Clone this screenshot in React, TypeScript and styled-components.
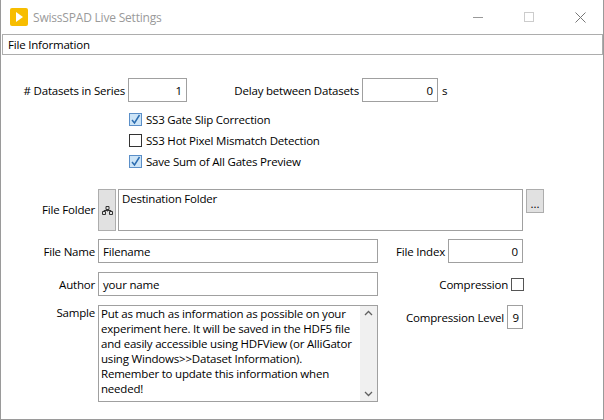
import styled, { createGlobalStyle } from "styled-components";

const Global = createGlobalStyle`
  html, body { margin: 0; padding: 0; background: #fff; }
  body { font-family: "Open Sans", "Noto Sans", sans-serif; font-size: 11.5px; letter-spacing: -0.2px; color: #000; }
`;

const Window = styled.div`
  width: 604px;
  height: 420px;
  box-sizing: border-box;
  border: 1px solid #9a9a9a;
  border-top: none;
  background: #fff;
  display: flex;
  flex-direction: column;
`;

const TitleBar = styled.div`
  height: 34px;
  display: flex;
  align-items: center;
  padding-left: 9px;
  gap: 5px;
  color: #9a9a9a;
  font-size: 12px;
`;

const TitleText = styled.span`
  flex: 1;
`;

const WinButton = styled.div`
  width: 46px;
  height: 34px;
  display: flex;
  align-items: center;
  justify-content: center;
`;

const TabHeader = styled.div`
  height: 19px;
  margin: 0 0 0 1px;
  border: 1px solid #adadad;
  display: flex;
  align-items: center;
  padding-left: 5px;
`;

const Body = styled.div`
  flex: 1;
  display: flex;
  flex-direction: column;
  padding-top: 23px;
`;

const Row = styled.div<{ $mt?: number }>`
  display: flex;
  align-items: center;
  margin-top: ${(p) => p.$mt ?? 0}px;
`;

const Label = styled.div<{ $w: number }>`
  width: ${(p) => p.$w}px;
  text-align: right;
  flex-shrink: 0;
  padding-right: 3px;
  box-sizing: border-box;
  white-space: nowrap;
`;

const Field = styled.div<{ $w: number; $h?: number; $align?: string }>`
  width: ${(p) => p.$w}px;
  height: ${(p) => p.$h ?? 24}px;
  box-sizing: border-box;
  border: 1px solid #a0a0a0;
  background: #fff;
  display: flex;
  align-items: ${(p) => (p.$h && p.$h > 30 ? "flex-start" : "center")};
  justify-content: ${(p) => (p.$align === "right" ? "flex-end" : "flex-start")};
  padding: ${(p) => (p.$h && p.$h > 30 ? "1px 3px" : "0 4px")};
  flex-shrink: 0;
`;

const CheckList = styled.div`
  display: flex;
  flex-direction: column;
  gap: 7px;
  padding-left: 128px;
  margin-top: 10px;
`;

const CheckRow = styled.div`
  display: flex;
  align-items: center;
  gap: 4px;
  height: 14px;
`;

const Box = styled.div<{ $on?: boolean }>`
  width: 13px;
  height: 13px;
  box-sizing: border-box;
  border: 1px solid ${(p) => (p.$on ? "#5b8fc8" : "#333")};
  background: ${(p) => (p.$on ? "#cce4f7" : "#fff")};
  display: flex;
  align-items: center;
  justify-content: center;
`;

const GreyButton = styled.div<{ $w: number; $h: number }>`
  width: ${(p) => p.$w}px;
  height: ${(p) => p.$h}px;
  box-sizing: border-box;
  border: 1px solid #adadad;
  background: #e1e1e1;
  display: flex;
  align-items: center;
  justify-content: center;
  flex-shrink: 0;
`;

const Stack = styled.div`
  display: flex;
`;

const Col = styled.div`
  display: flex;
  flex-direction: column;
  gap: 9px;
`;

const Sample = styled.div`
  width: 280px;
  height: 97px;
  box-sizing: border-box;
  border: 1px solid #a0a0a0;
  display: flex;
`;

const SampleText = styled.div`
  flex: 1;
  padding: 0 2px;
  line-height: 15px;
`;

const Scroll = styled.div`
  width: 17px;
  background: #f0f0f0;
  display: flex;
  flex-direction: column;
  justify-content: space-between;
  align-items: center;
  padding: 4px 0;
`;

const Check = () => (
  <svg width="11" height="11" viewBox="0 0 11 11">
    <path d="M2 6 L4.5 9 L9.5 1" stroke="#2b6cb0" strokeWidth="1.5" fill="none" />
  </svg>
);

export default function App() {
  return (
    <>
      <Global />
      <Window>
        <TitleBar>
          <svg width="18" height="18" viewBox="0 0 18 18">
            <rect width="18" height="18" rx="2" fill="#f7bd00" />
            <path d="M6 4 L13 9 L6 14 Z" fill="#fff" />
          </svg>
          <TitleText>SwissSPAD Live Settings</TitleText>
          <WinButton>
            <svg width="10" height="10"><path d="M0 5.5 H10" stroke="#999" /></svg>
          </WinButton>
          <WinButton>
            <svg width="10" height="10"><rect x="0.5" y="0.5" width="9" height="9" fill="none" stroke="#ccc" /></svg>
          </WinButton>
          <WinButton>
            <svg width="11" height="11"><path d="M0.5 0.5 L10.5 10.5 M10.5 0.5 L0.5 10.5" stroke="#777" /></svg>
          </WinButton>
        </TitleBar>
        <TabHeader>File Information</TabHeader>
        <Body>
          <Row>
            <Label $w={127}># Datasets in Series</Label>
            <Field $w={59} $align="right">1</Field>
            <Label $w={175}>Delay between Datasets</Label>
            <Field $w={76} $align="right">0</Field>
            <span style={{ marginLeft: 4 }}>s</span>
          </Row>
          <CheckList>
            <CheckRow><Box $on><Check /></Box>SS3 Gate Slip Correction</CheckRow>
            <CheckRow><Box />SS3 Hot Pixel Mismatch Detection</CheckRow>
            <CheckRow><Box $on><Check /></Box>Save Sum of All Gates Preview</CheckRow>
          </CheckList>
          <Row $mt={21} style={{ alignItems: "flex-start" }}>
            <Label $w={97} style={{ paddingTop: 13 }}>File Folder</Label>
            <GreyButton $w={18} $h={42}>
              <svg width="11" height="9" viewBox="0 0 11 9">
                <path d="M4 0.5 H7 V3.5 H4 Z M0.5 5.5 H3.5 V8.5 H0.5 Z M7.5 5.5 H10.5 V8.5 H7.5 Z M5.5 3.5 V5.5 M2 5.5 V4.5 H9 V5.5" stroke="#333" fill="none" strokeWidth="1" />
              </svg>
            </GreyButton>
            <Field $w={405} $h={42} style={{ marginLeft: 2 }}>Destination Folder</Field>
            <GreyButton $w={18} $h={24} style={{ marginLeft: 3, alignItems: "flex-end", paddingBottom: 4 }}>
              <span style={{ lineHeight: "8px", letterSpacing: 0 }}>...</span>
            </GreyButton>
          </Row>
          <Stack style={{ marginTop: 8 }}>
            <Col>
              <Row>
                <Label $w={97}>File Name</Label>
                <Field $w={280}>Filename</Field>
              </Row>
              <Row>
                <Label $w={97}>Author</Label>
                <Field $w={280}>your name</Field>
              </Row>
              <Row style={{ alignItems: "flex-start" }}>
                <Label $w={97}>Sample</Label>
                <Sample>
                  <SampleText>
                    Put as much as information as possible on your experiment here. It will be saved in the HDF5 file and easily accessible using HDFView (or AlliGator using Windows&gt;&gt;Dataset Information). Remember to update this information when needed!
                  </SampleText>
                  <Scroll>
                    <svg width="9" height="6"><path d="M1 5 L4.5 1.5 L8 5" stroke="#606060" fill="none" strokeWidth="1.3" /></svg>
                    <svg width="9" height="6"><path d="M1 1 L4.5 4.5 L8 1" stroke="#606060" fill="none" strokeWidth="1.3" /></svg>
                  </Scroll>
                </Sample>
              </Row>
            </Col>
            <Col>
              <Row>
                <Label $w={70}>File Index</Label>
                <Field $w={75} $align="right">0</Field>
              </Row>
              <Row style={{ height: 24 }}>
                <Label $w={133}>Compression</Label>
                <Box style={{ borderColor: "#555" }} />
              </Row>
              <Row>
                <Label $w={129}>Compression Level</Label>
                <Field $w={16} $align="right" style={{ padding: "0 3px" }}>9</Field>
              </Row>
            </Col>
          </Stack>
        </Body>
      </Window>
    </>
  );
}
